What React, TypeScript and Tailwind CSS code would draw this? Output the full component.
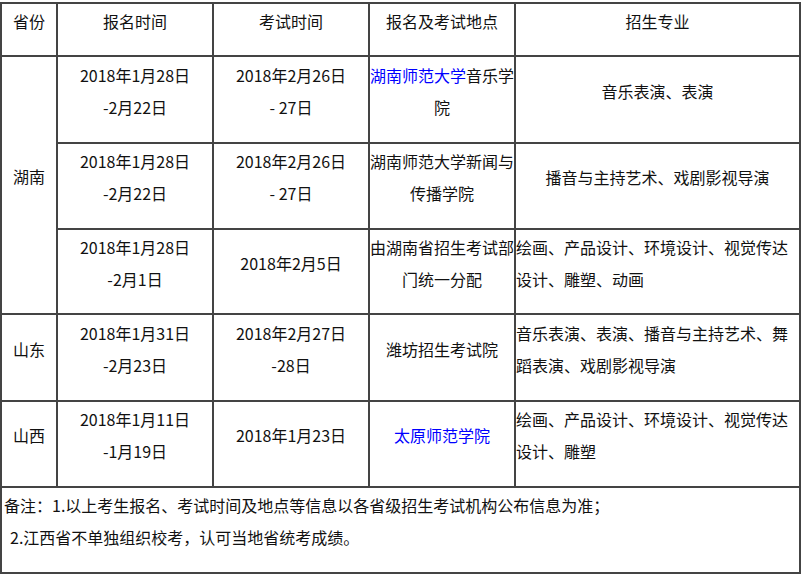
import React from "react";

const B = "border-2 border-[#444] p-0 align-middle";

function C({ children, left = false }: { children: React.ReactNode; left?: boolean }) {
  return <div className={`mb-[18px] leading-8 ${left ? "text-left" : "text-center"}`}>{children}</div>;
}

function Link({ children }: { children: React.ReactNode }) {
  return <span className="text-[#0000ff]">{children}</span>;
}

export default function App() {
  return (
    <div className="bg-white w-[806px] h-[577px] pt-[2px] text-[16px] text-[#111]" style={{ fontFamily: '"Noto Sans CJK SC", sans-serif' }}>
      <table className="border-collapse table-fixed w-[801px]">
        <colgroup>
          <col className="w-[56px]" />
          <col className="w-[156px]" />
          <col className="w-[156px]" />
          <col className="w-[146px]" />
          <col className="w-[285px]" />
        </colgroup>
        <tbody>
          <tr className="h-[53px]">
            <td className={B}><C>省份</C></td>
            <td className={B}><C>报名时间</C></td>
            <td className={B}><C>考试时间</C></td>
            <td className={B}><C>报名及考试地点</C></td>
            <td className={B}><C>招生专业</C></td>
          </tr>
          <tr className="h-[87px]">
            <td className={B} rowSpan={3}><C>湖南</C></td>
            <td className={B}><C>2018年1月28日<br />-2月22日</C></td>
            <td className={B}><C>2018年2月26日<br />- 27日</C></td>
            <td className={B}><C><span className="whitespace-nowrap"><Link>湖南师范大学</Link>音乐学</span><br />院</C></td>
            <td className={B}><C>音乐表演、表演</C></td>
          </tr>
          <tr className="h-[86px]">
            <td className={B}><C>2018年1月28日<br />-2月22日</C></td>
            <td className={B}><C>2018年2月26日<br />- 27日</C></td>
            <td className={B}><C>湖南师范大学新闻与<br />传播学院</C></td>
            <td className={B}><C>播音与主持艺术、戏剧影视导演</C></td>
          </tr>
          <tr className="h-[85px]">
            <td className={B}><C>2018年1月28日<br />-2月1日</C></td>
            <td className={B}><C>2018年2月5日</C></td>
            <td className={B}><C>由湖南省招生考试部<br />门统一分配</C></td>
            <td className={B}><C left>绘画、产品设计、环境设计、视觉传达设计、雕塑、动画</C></td>
          </tr>
          <tr className="h-[87px]">
            <td className={B}><C>山东</C></td>
            <td className={B}><C>2018年1月31日<br />-2月23日</C></td>
            <td className={B}><C>2018年2月27日<br />-28日</C></td>
            <td className={B}><C>潍坊招生考试院</C></td>
            <td className={B}><C left>音乐表演、表演、播音与主持艺术、舞蹈表演、戏剧影视导演</C></td>
          </tr>
          <tr className="h-[86px]">
            <td className={B}><C>山西</C></td>
            <td className={B}><C>2018年1月11日<br />-1月19日</C></td>
            <td className={B}><C>2018年1月23日</C></td>
            <td className={B}><C><Link>太原师范学院</Link></C></td>
            <td className={B}><C left>绘画、产品设计、环境设计、视觉传达设计、雕塑</C></td>
          </tr>
          <tr className="h-[86px]">
            <td className={B} colSpan={5}>
              <div className="mb-[18px] leading-8 text-left pl-[2px]">
                <div>备注：1.以上考生报名、考试时间及地点等信息以各省级招生考试机构公布信息为准；</div>
                <div className="pl-[6px]">2.江西省不单独组织校考，认可当地省统考成绩。</div>
              </div>
            </td>
          </tr>
        </tbody>
      </table>
    </div>
  );
}
